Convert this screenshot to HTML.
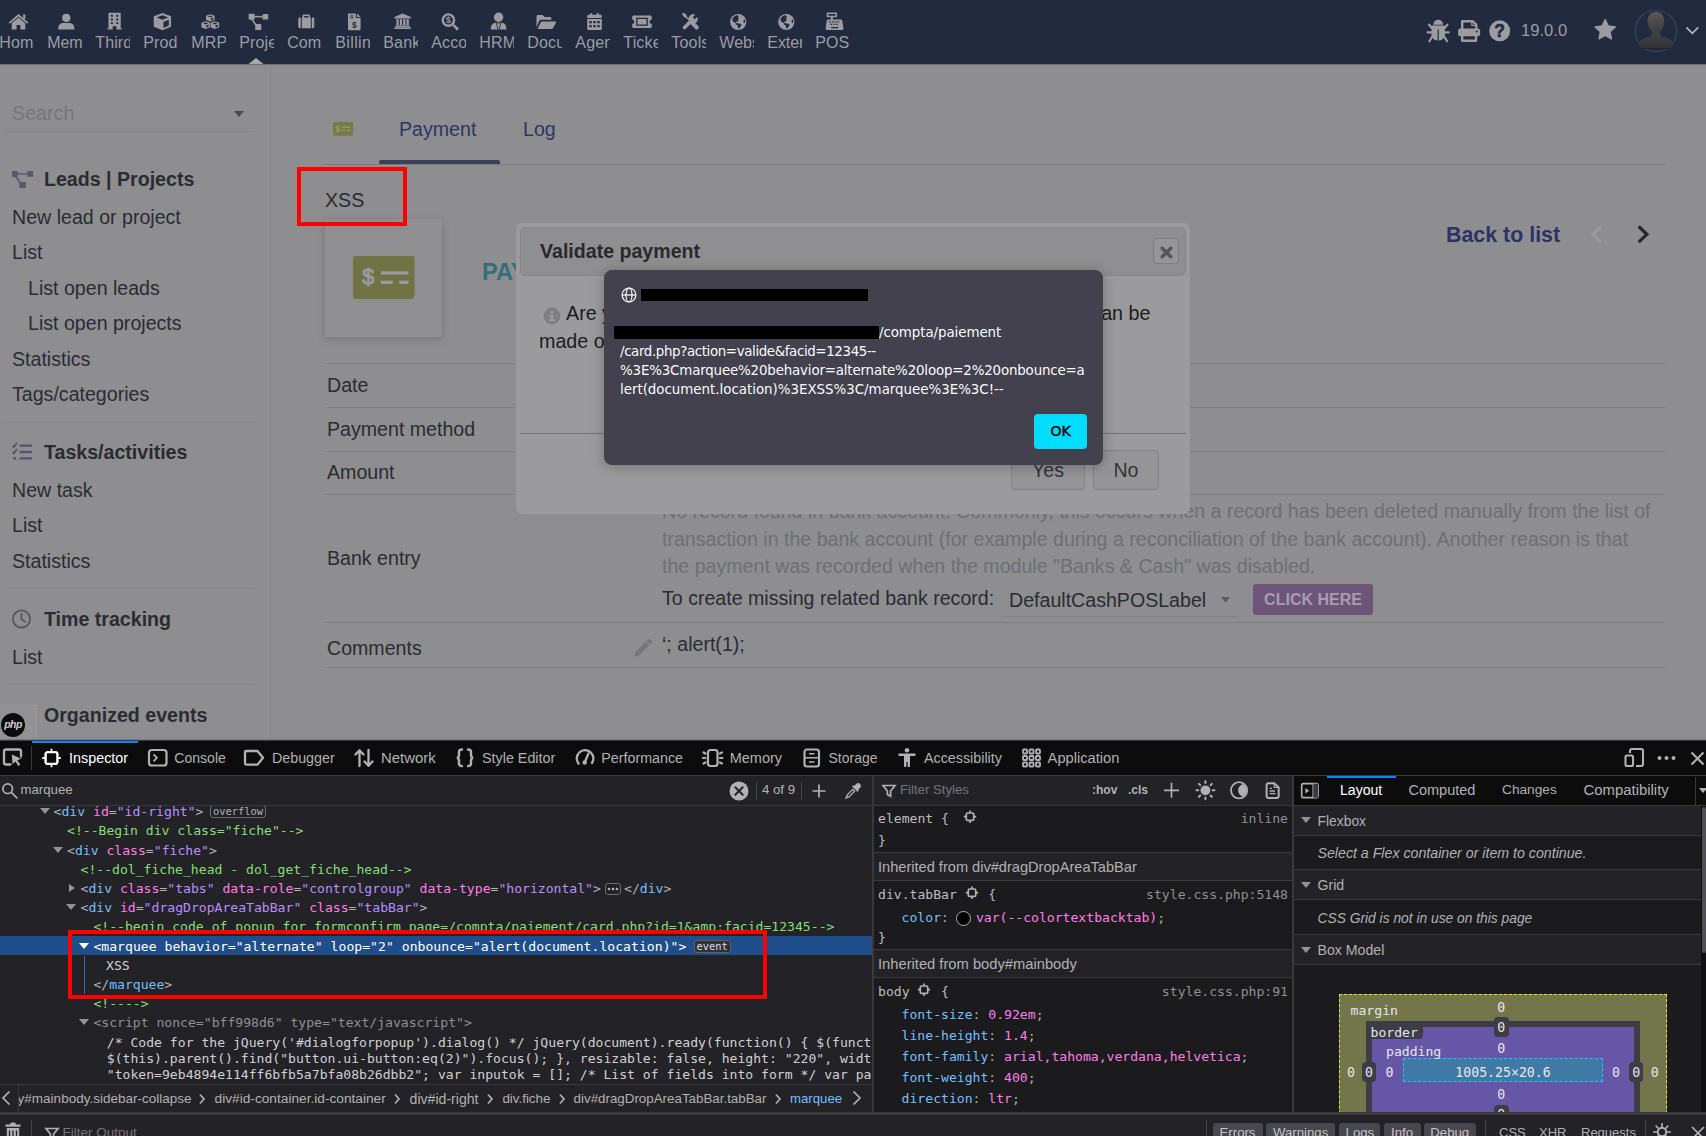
<!DOCTYPE html>
<html lang="en">
<head>
<meta charset="utf-8">
<title>Payment - XSS</title>
<style>
*{box-sizing:border-box;margin:0;padding:0}
html,body{width:1706px;height:1136px;overflow:hidden;background:#8e8e90}
body{position:relative;font-family:"Liberation Sans",Arial,sans-serif;color:#2b2b33}
.abs{position:absolute}
svg{display:block;position:absolute;overflow:visible}
/* ---------- top bar ---------- */
#top{position:absolute;left:0;top:0;width:1706px;height:64px;background:#222a40}
#topline{position:absolute;left:0;top:64px;width:1706px;height:1px;background:#6c6c72}
.mi{position:absolute;top:0;width:48px;height:64px}
.mi span{position:absolute;left:-0.7px;top:33px;width:34.6px;overflow:hidden;white-space:nowrap;font-size:16px;line-height:20px;color:#9c9ca0}
.mi svg{left:13px;top:10px;width:22px;height:20px;fill:#9c9ca0}
/* ---------- sidebar ---------- */
#side{position:absolute;left:0;top:65px;width:271px;height:676px;background:#8e8e90;border-right:1px solid #87878a}
.sl{position:absolute;left:12px;font-size:19.6px;line-height:24px;color:#2b2b35;white-space:nowrap}
.sl.in{left:28px}
.sh{position:absolute;left:44px;font-size:19.6px;line-height:24px;font-weight:bold;color:#2b2b33;white-space:nowrap}
.shr{position:absolute;left:4px;width:250px;height:1px;background:#88888b}
/* ---------- main ---------- */
.hr{position:absolute;left:325px;width:1340px;height:1px;background:#7f7f83}
.lab{position:absolute;left:327px;font-size:19.6px;line-height:24px;color:#2b2b33;white-space:nowrap}

/* ---------- devtools ---------- */
#devtools{position:absolute;left:0;top:739px;width:1706px;height:397px;background:#232327;font-family:"Liberation Sans",sans-serif;overflow:hidden}
#devtools .tb{position:absolute;left:0;top:2px;width:1706px;height:34px;background:#0c0c0d}
#devtools .tab{position:absolute;top:10px;font-size:14.400px;line-height:18px;color:#b1b1b3;white-space:nowrap}
#devtools svg.ic{fill:none;stroke:#b1b1b3;stroke-width:1.700}
.mono{font-family:"DejaVu Sans Mono","Liberation Mono",monospace;font-size:13.100px;white-space:pre}
.ml{position:absolute;height:19px;line-height:19px;color:#b1b1b3}
.t{color:#75bfff}.an{color:#ff7de9}.av{color:#b98eff}.c{color:#86de74}
.arr{position:absolute;width:0;height:0;border-left:5px solid transparent;border-right:5px solid transparent;border-top:6.500px solid #939395}
.arr.r{border-top:4.500px solid transparent;border-bottom:4.500px solid transparent;border-left:6px solid #939395;border-right:0}
.badge{position:absolute;height:13px;line-height:11px;border:1px solid #6b6b70;border-radius:3px;font-family:"DejaVu Sans Mono",monospace;font-size:10.400px;color:#b1b1b3;padding:0 2px}
.bc{top:5px;font-size:13.700px;line-height:18px;color:#b1b1b3;white-space:nowrap}
.bmt{font-family:"DejaVu Sans Mono",monospace;font-size:13.100px;line-height:16px;margin-top:1.700px;color:#e6e6ea;white-space:pre}
</style>
</head>
<body>
<div id="top">
<svg width="1706" height="64" viewBox="0 0 1706 64" style="left:0;top:0" fill="#9c9ca0">
<!-- home -->
<g transform="translate(18.5,21.7)"><path d="M-9.9 .7 0-7.8l9.9 8.5-1.2 1.4L0-5.2l-8.7 7.3z"/><path d="M-6.8 1.6 0-4.1l6.8 5.7v6.2H1.9V3.2h-3.8v4.6h-4.9z"/><rect x="4.6" y="-7.3" width="2.3" height="4.4"/></g>
<!-- user -->
<g transform="translate(66.3,21.7)"><circle cx="0" cy="-3.8" r="4.1"/><path d="M-8 7.8V6.1c0-2.9 2.4-4.7 5-4.7h6c2.6 0 5 1.8 5 4.7v1.7z"/></g>
<!-- building -->
<g transform="translate(114.500,21.700)"><path fill-rule="evenodd" d="M-6-8.900H6.200V6.800h1.300v1.100H2V4.500H-1.800v3.400h-5.500V6.800H-6zM-3.700-6.900v1.900h2.100v-1.900zm5.400 0v1.900h2.100v-1.900zm-5.400 3.700v1.900h2.100v-1.900zm5.400 0v1.900h2.100v-1.900zm-5.400 3.700v1.900h2.100V.5zm5.400 0v1.900h2.100V.5z"/></g>
<!-- cube -->
<g transform="translate(162.400,21.700) scale(1.03)"><path fill-rule="evenodd" d="M0-8.4 8.4-5.3v10.2L0 8.4l-8.4-3.5V-5.3zM0-6.2-5.6-4.1 0-2 5.600-4.100zM1 .2v5.800l5.200-2.200v-5.600z"/></g>
<!-- cubes -->
<g transform="translate(210.300,21.900) scale(1,.92)"><path fill-rule="evenodd" d="M0-8.300 4.300-6.700v4.600L0-.3l-4.300-1.800v-4.600zM0-7-2.600-6 0-5 2.600-6zM.600-3.900v2.200l2.300-1v-2.100z"/><path fill-rule="evenodd" d="M-4.600-.6-.3 1v4.800l-4.300 1.900-4.300-1.900V1zM-4.600.7-7.200 1.700-4.600 2.700-2 1.700zM-4 3.800v2.400l2.300-1V2.900z"/><path fill-rule="evenodd" d="M4.600-.6 8.900 1v4.800L4.600 7.700.3 5.800V1zM4.600.7 2 1.700l2.600 1 2.600-1zM5.200 3.800v2.400l2.300-1V2.900z"/></g>
<!-- project diagram -->
<g transform="translate(258,21.500)"><rect x="-9.300" y="-7.800" width="6" height="6.100" rx=".7"/><rect x="4.500" y="-7.600" width="5.700" height="5.700" rx=".7"/><rect x="-2.800" y="2.600" width="6.100" height="6" rx=".7"/><rect x="-3.500" y="-5.600" width="8.200" height="1.500"/><path d="M-6-2-1.200 4.500" fill="none" stroke="#9c9ca0" stroke-width="1.500"/></g>
<!-- suitcase -->
<g transform="translate(306.300,21.800) scale(.92)"><path fill-rule="evenodd" d="M-4-4.700v-1.800c0-.8.600-1.400 1.400-1.400h5.200c.8 0 1.400.6 1.400 1.400v1.800h.9V7h-9.800V-4.700zm1.700 0h4.600v-1.500h-4.600z"/><path d="M-6-4.700V7h-1.100C-8 7-8.700 6.300-8.700 5.400v-8.500c0-.9.700-1.600 1.600-1.600zM6-4.700V7h1.100c.9 0 1.600-.7 1.600-1.600v-8.500c0-.9-.7-1.600-1.600-1.600z"/></g>
<!-- file invoice dollar -->
<g transform="translate(354.300,21.800)"><path d="M-6.300-8.400H1.600v4.700h4.700V7.600c0 .5-.4.800-.8.800H-5.500c-.4 0-.8-.3-.8-.8zM2.700-8.400 6.300-4.800H2.700z"/><rect x="-4.300" y="-6.300" width="3.600" height=".9" fill="#222a40"/><rect x="-4.300" y="-4.400" width="3.600" height=".9" fill="#222a40"/><text x="0" y="5.800" font-size="8.500" font-weight="bold" text-anchor="middle" fill="#222a40" font-family="Liberation Sans, sans-serif">$</text></g>
<!-- university -->
<g transform="translate(402.600,21.700) scale(.94)"><path d="M0-8.600 8.700-5v1.500H-8.700V-5z"/><rect x="-6.600" y="-2.800" width="2.400" height="6.400"/><rect x="-3" y="-2.800" width="2.400" height="6.400"/><rect x=".6" y="-2.800" width="2.400" height="6.400"/><rect x="4.200" y="-2.800" width="2.400" height="6.400"/><rect x="-7.600" y="3.900" width="15.200" height="1.600"/><rect x="-8.700" y="5.900" width="17.400" height="1.800"/></g>
<!-- search dollar -->
<g transform="translate(450,21.700)"><circle cx="-1.600" cy="-1.600" r="5.700" fill="none" stroke="#9c9ca0" stroke-width="2.400"/><path d="M2.700 4.300 4.300 2.700 8.600 7 7 8.600z" stroke="#9c9ca0" stroke-width=".8" stroke-linejoin="round"/><text x="-1.600" y="1.500" font-size="8.500" font-weight="bold" text-anchor="middle" font-family="Liberation Sans, sans-serif">$</text></g>
<!-- user tie -->
<g transform="translate(498.600,21.700)"><circle cx="0" cy="-4.400" r="4.700"/><path d="M-3 1.100h6C5.800 1.300 7.700 3.200 7.700 5.800v2.100H-7.700V5.800C-7.700 3.200-5.800 1.300-3 1.100z"/><path d="M-2.200 1.300-.55 7.900M2.200 1.300 .55 7.900" fill="none" stroke="#222a40" stroke-width=".9"/><path d="M-.9 1.500h1.800l-.5 1.100z" fill="#222a40"/></g>
<!-- folder open -->
<g transform="translate(546,22)"><path d="M-9.500 5.200V-5.600c0-.9.700-1.500 1.500-1.500h4.600l2 2h5.300c.8 0 1.500.6 1.500 1.500v1.300H-4.400c-1 0-1.900.5-2.400 1.400z"/><path d="M-8.400 7-5.300.4c.3-.6.900-.9 1.500-.9H9.100c.7 0 1.100.7.800 1.300L7.100 6.100C6.800 6.700 6.200 7 5.600 7z"/></g>
<!-- calendar -->
<g transform="translate(594.500,21.700) scale(.95,1)"><path d="M-7.700-3.700V-5.300c0-.9.700-1.600 1.600-1.600h1.600v-1.600h2.100v1.600h4.800v-1.600h2.100v1.600h1.600c.9 0 1.600.7 1.600 1.600v1.600z"/><path fill-rule="evenodd" d="M-7.700-2.600H7.700V6.800c0 .9-.7 1.600-1.600 1.600H-6.100c-.9 0-1.600-.7-1.600-1.600zM-5.500-.7v2.300h2.600V-.7zm4.200 0v2.300h2.600V-.7zm4.200 0v2.300h2.600V-.7zM-5.500 3.300v2.300h2.600V3.300zm4.200 0v2.300h2.600V3.300zm4.200 0v2.300h2.600V3.300z"/></g>
<!-- ticket -->
<g transform="translate(642,21.700)"><path fill-rule="evenodd" d="M-9.800-4.700c0-.9.700-1.600 1.600-1.600H8.200c.9 0 1.600.7 1.600 1.600v2.500c-1.200 0-2.200 1-2.200 2.200s1 2.200 2.200 2.200v2.500c0 .9-.7 1.600-1.600 1.600H-8.200c-.9 0-1.600-.7-1.600-1.600V2.200c1.200 0 2.200-1 2.200-2.200s-1-2.200-2.200-2.200zM-5.800-4v8H5.800v-8zm1.300 1.300H4.500v5.400H-4.500z"/></g>
<!-- tools -->
<g transform="translate(690.700,21.400) scale(.9)"><g transform="rotate(45)"><path d="M-1.700-8.600v3.700h3.400v-3.700c2.300.8 3.500 2.800 3.500 4.800 0 2-1.200 3.600-3.100 4.400V10c0 1-.9 1.700-2.100 1.700S-2.100 11-2.100 10V.6C-4-.2-5.200-1.800-5.200-3.800c0-2 1.200-4 3.500-4.800z"/></g><g transform="rotate(-45)"><path d="M-1.200-12.600h2.400l.6 4.300-1 1.600V-.5h-1.600v-6.200l-1-1.600z"/><rect x="-2.200" y="1" width="4.400" height="10.500" rx="1.500"/></g></g>
<!-- globe 1 -->
<g transform="translate(738.200,22)"><circle r="8.100"/><path fill="#222a40" d="M-.8-6.800.8-5.400-.6-4.400.9-3.200-.3-2.200.2-.8-1.800-.2-2.600 1-4.400.2-5.900-1.800-5.600-3.800-4-5.600-2.400-6.600z"/><path fill="#222a40" d="M-2.600.9 0 1.200 3.400 2.600 2.600 4.400 1.400 5.400.9 7.200-.2 5.600-.6 3.400-2.200 2.400z"/><ellipse cx="6.100" cy="-.8" rx=".8" ry="2" fill="#222a40"/></g>
<!-- globe 2 -->
<g transform="translate(786.300,22)"><circle r="8.100"/><path fill="#222a40" d="M-.8-6.800.8-5.400-.6-4.400.9-3.200-.3-2.200.2-.8-1.800-.2-2.600 1-4.400.2-5.900-1.800-5.600-3.800-4-5.600-2.400-6.600z"/><path fill="#222a40" d="M-2.600.9 0 1.200 3.400 2.600 2.600 4.400 1.400 5.400.9 7.200-.2 5.600-.6 3.400-2.200 2.400z"/><ellipse cx="6.100" cy="-.8" rx=".8" ry="2" fill="#222a40"/></g>
<!-- cash register -->
<g transform="translate(834.600,21.200)"><path fill-rule="evenodd" d="M-7.200-8.600H1.800c.4 0 .7.300.7.700v3.200c0 .4-.3.700-.7.700H-7.200c-.4 0-.7-.3-.7-.7v-3.200c0-.4.300-.7.700-.7zM-6.200-7.100v1.600H.8v-1.600z"/><rect x="-3.700" y="-4.200" width="2" height="2.800"/><path fill-rule="evenodd" d="M-6.600-1.600H6.400c.6 0 1.100.4 1.200 1l1.200 6.800v1.400c0 .6-.5 1.100-1.100 1.100H-7.800c-.6 0-1.100-.5-1.100-1.100V6.200l1.100-6.800c.1-.6.600-1 1.200-1zM-5.300 0v1.400h1.500V0zm2.800 0v1.400H-1V0zm2.800 0v1.400h1.500V0zm2.800 0v1.400h1.500V0zM-4 2.500v1.400h1.500V2.500zm2.800 0v1.400h1.500V2.500zm2.800 0v1.400h1.500V2.500zM-3.500 5.700v1.400H3.500V5.700z"/></g>
<!-- active triangle -->
<path d="M248.500 64 256 58 263.500 64z" fill="#a8a8aa"/>
<!-- bug -->
<g transform="translate(1438.200,31)"><path d="M-4.900-6.300A4.900 4.900 0 0 1 4.900-6.300z"/><path d="M-6.700-5.600H6.700v9.100c0 3-2.200 5.800-6.100 6.100V-1.500H-.6V9.600C-4.500 9.300-6.700 6.500-6.700 3.500z"/><path d="M-6.500-3-9.200-6.400M6.500-3 9.200-6.400M-6.500 1.300h-4.100M6.500 1.300h4.100M-6.300 6-8.800 10.300M6.300 6 8.800 10.300" fill="none" stroke="#9c9ca0" stroke-width="2.200" stroke-linecap="round"/></g>
<!-- print -->
<g transform="translate(1469.100,31)"><path d="M-6.900-1.500V-9.700H3.700L7.200-6.400v4.900" fill="none" stroke="#9c9ca0" stroke-width="2.400" stroke-linejoin="round"/><path d="M2.800-9.700v4h4.400" fill="none" stroke="#9c9ca0" stroke-width="1.200"/><rect x="-11" y="-2.400" width="22" height="7.600" rx="2.200"/><rect x="-6.900" y="4" width="13.800" height="5.800" fill="#222a40" stroke="#9c9ca0" stroke-width="2.400" stroke-linejoin="round"/><circle cx="7.700" cy=".6" r="1" fill="#222a40"/></g>
<!-- help -->
<g transform="translate(1499.700,30.800)"><circle r="10.500"/><text x="0" y="6.300" font-size="17.500" font-weight="bold" text-anchor="middle" fill="#222a40" stroke="#222a40" stroke-width=".5" font-family="Liberation Sans, sans-serif">?</text></g>
<!-- star -->
<path transform="translate(1605.200,30.200)" d="M0-10.600 3-4.130 10.080-3.280 4.850 1.580 6.230 8.580 0 5.100-6.230 8.580-4.850 1.580-10.080-3.280-3-4.130z" stroke="#9c9ca0" stroke-width="1.400" stroke-linejoin="round"/>
<!-- avatar -->
<g transform="translate(1655.900,30.900)"><defs><linearGradient id="avg" x1="0" y1="0" x2="0" y2="1"><stop offset="0" stop-color="#58585a"/><stop offset=".45" stop-color="#424244"/><stop offset="1" stop-color="#343436"/></linearGradient></defs><circle r="20.700" fill="#222a40" stroke="#3b4562" stroke-width="1.100"/><path d="M0-19.200C5-19.200 8.300-15.500 8.300-10.500 8.300-6.500 7.200-3 5-.5L4.300 2.500C4.300 4.500 5.500 5.500 7.500 6.200L13.500 8C15.500 8.700 16.300 10 16.300 12v5.400H-16.300V12c0-2 .8-3.300 2.800-4L-7.500 6.200c2-.7 3.200-1.700 3.200-3.700L-5-.5C-7.200-3-8.300-6.500-8.300-10.500-8.300-15.500-5-19.200 0-19.200z" fill="url(#avg)"/><path d="M-14.800 17.400h29.600" stroke="#222226" stroke-width="1" fill="none"/></g>
<!-- chevron -->
<path d="M1686.400 27.400 1692.300 33.300 1698.200 27.400" fill="none" stroke="#b4b4b8" stroke-width="1.700"/>
</svg>
<div class="mi" style="left:0"><span style="letter-spacing:0.08px">Home</span></div>
<div class="mi" style="left:48px"><span style="letter-spacing:-0.185px">Members</span></div>
<div class="mi" style="left:96px"><span style="letter-spacing:0.109px">Third-parties</span></div>
<div class="mi" style="left:144px"><span style="letter-spacing:0.061px">Products</span></div>
<div class="mi" style="left:192px"><span style="letter-spacing:0.148px">MRP</span></div>
<div class="mi" style="left:240px"><span style="letter-spacing:0.13px">Projects</span></div>
<div class="mi" style="left:288px"><span style="letter-spacing:-0.027px">Commerce</span></div>
<div class="mi" style="left:336px"><span style="letter-spacing:0.368px">Billing</span></div>
<div class="mi" style="left:384px"><span style="letter-spacing:0.133px">Banks</span></div>
<div class="mi" style="left:432px"><span style="letter-spacing:0.107px">Accounting</span></div>
<div class="mi" style="left:480px"><span style="letter-spacing:0.188px">HRM</span></div>
<div class="mi" style="left:528px"><span style="letter-spacing:0.162px">Documents</span></div>
<div class="mi" style="left:576px"><span style="letter-spacing:0.158px">Agenda</span></div>
<div class="mi" style="left:624px"><span style="letter-spacing:0.155px">Tickets</span></div>
<div class="mi" style="left:672px"><span style="letter-spacing:0.175px">Tools</span></div>
<div class="mi" style="left:720px"><span style="letter-spacing:0.025px">Websites</span></div>
<div class="mi" style="left:768px"><span style="letter-spacing:-0.069px">External</span></div>
<div class="mi" style="left:816px"><span style="letter-spacing:0.07px">POS</span></div>
<div class="abs" style="left:1521px;top:21px;font-size:16.600px;line-height:20px;color:#9c9ca0">19.0.0</div>
</div>
<div id="topline"></div>
<div id="side">
<div class="abs" style="left:12px;top:36px;font-size:19.700px;line-height:24px;color:#76767b">Search</div>
<svg width="10" height="6" viewBox="0 0 10 6" style="left:234px;top:46px"><path d="M0 0h10L5 6z" fill="#4a4a50"/></svg>
<div class="abs" style="left:4px;top:64px;width:250px;height:3px;border-bottom:1px solid #838387;border-radius:0 0 4px 4px"></div>
<svg width="22" height="18" viewBox="0 0 22 18" style="left:12px;top:106px" fill="#5a5570"><rect x="0" y="0" width="5.700" height="5.700" rx=".5"/><rect x="15.300" y="0" width="5.800" height="5.700" rx=".5"/><rect x="7.400" y="11" width="6.600" height="5.900" rx=".5"/><rect x="5" y="2.200" width="11" height="1.400"/><path d="M3.500 5.200 8.600 12.300" fill="none" stroke="#5a5570" stroke-width="1.500"/></svg>
<div class="sh" style="top:102px">Leads | Projects</div>
<div class="sl" style="top:140px">New lead or project</div>
<div class="sl" style="top:175px">List</div>
<div class="sl in" style="top:211px">List open leads</div>
<div class="sl in" style="top:246px">List open projects</div>
<div class="sl" style="top:282px">Statistics</div>
<div class="sl" style="top:317px">Tags/categories</div>
<div class="shr" style="top:357px"></div>
<svg width="22" height="18" viewBox="0 0 22 18" style="left:12px;top:378px" fill="none" stroke="#595273" stroke-width="2.300"><path d="M7.500 2.700H20M7.500 9H20M7.500 15.300H20"/><path d="M.5 2.500 2 4 5-.2M.5 8.800 2 10.300 5 6.100" stroke-width="1.900"/><circle cx="2.600" cy="15.300" r="1.500" fill="#595273" stroke="none"/></svg>
<div class="sh" style="top:375px">Tasks/activities</div>
<div class="sl" style="top:413px">New task</div>
<div class="sl" style="top:448px">List</div>
<div class="sl" style="top:484px">Statistics</div>
<div class="shr" style="top:523px"></div>
<svg width="20" height="20" viewBox="0 0 20 20" style="left:12px;top:544px" fill="none" stroke="#55555d" stroke-width="1.700"><circle cx="9.500" cy="10" r="8.600"/><path d="M9.500 4.800V10.300L13 12.600" stroke-linecap="round"/></svg>
<div class="sh" style="top:542px">Time tracking</div>
<div class="sl" style="top:580px">List</div>
<div class="shr" style="top:619px"></div>
<div class="sh" style="top:638px">Organized events</div>
<div class="abs" style="left:0;top:640px;width:37px;height:36px;background:#929294;border-top:1px solid #99999b;border-right:1px solid #99999b"></div>
<div class="abs" style="left:1px;top:648px;width:24px;height:24px;border-radius:12px;background:#0c0c0d"></div>
<div class="abs" style="left:3px;top:652px;width:20px;text-align:center;font-size:10.500px;line-height:14px;font-style:italic;font-weight:bold;color:#c8c8cc;letter-spacing:-0.5px">php</div>
</div>
<div id="main">
<!-- tabs -->
<svg width="20" height="13.700" viewBox="0 0 22 15" style="left:332.500px;top:122.100px" preserveAspectRatio="none"><rect x="0" y="0" width="22" height="15" rx="1.500" fill="#767a45"/><text x="2.800" y="11" font-size="9" font-weight="bold" fill="#9a9d78" font-family="Liberation Sans, sans-serif">$</text><rect x="9.500" y="5" width="9.500" height="1.300" fill="#9a9d78"/><rect x="9.500" y="8.500" width="3.800" height="1.300" fill="#9a9d78"/><rect x="15.200" y="8.500" width="3.800" height="1.300" fill="#9a9d78"/></svg>
<div class="abs" style="left:399px;top:117px;font-size:19.600px;line-height:24px;color:#2f3563">Payment</div>
<div class="abs" style="left:523px;top:117px;font-size:19.600px;line-height:24px;color:#2f3563">Log</div>
<div class="hr" style="top:164px;background:#7d7d81"></div>
<div class="abs" style="left:379px;top:160px;width:121px;height:4px;background:#3a4258;border-radius:2px 2px 0 0"></div>
<!-- XSS -->
<div class="abs" style="left:325px;top:188px;font-size:19.600px;line-height:24px;color:#2b2b33">XSS</div>
<!-- card -->
<div class="abs" style="left:325px;top:219px;width:117px;height:118px;background:#8f8f91;box-shadow:0 3px 8px rgba(60,60,70,.22),0 0 3px rgba(60,60,70,.1)"></div>
<svg width="62" height="44" viewBox="0 0 62 44" style="left:352.500px;top:256px"><rect x="0" y="0" width="61.500" height="43.100" rx="3" fill="#707444"/><text x="9.300" y="28.300" font-size="21.500" fill="#9b9b9f" stroke="#9b9b9f" stroke-width="1" font-family="Liberation Sans, sans-serif">$</text><rect x="27.800" y="15.400" width="27.600" height="3.100" fill="#9b9b9f"/><rect x="27.800" y="24.700" width="12" height="3.200" fill="#9b9b9f"/><rect x="46.200" y="24.700" width="9.200" height="3.200" fill="#9b9b9f"/></svg>
<div class="abs" style="left:482px;top:256px;font-size:23.500px;line-height:32px;font-weight:bold;color:#33707a;white-space:nowrap">PAYMENT</div>
<div class="abs" style="left:1446px;top:222px;font-size:21.400px;line-height:26px;font-weight:bold;color:#2d3262;white-space:nowrap">Back to list</div>
<svg width="60" height="26" viewBox="0 0 60 26" style="left:1590px;top:222px" fill="none" stroke-width="3.200"><path d="M11 4.500 2.800 12.300 11 20.100" stroke="#9a9a9d"/><path d="M48.700 4.500 56.900 12.300 48.700 20.100" stroke="#26262e"/></svg>
<div class="abs" style="left:297px;top:167px;width:110px;height:59px;border:4px solid #ff0000"></div>
<!-- rows -->
<div class="hr" style="top:363px"></div>
<div class="lab" style="top:373px">Date</div>
<div class="hr" style="top:407px"></div>
<div class="lab" style="top:417px">Payment method</div>
<div class="hr" style="top:451px"></div>
<div class="lab" style="top:460px">Amount</div>
<div class="hr" style="top:494px"></div>
<div class="lab" style="top:546px">Bank entry</div>
<div class="abs" style="left:662px;top:498px;width:995px;font-size:19.600px;line-height:27.500px;color:#6f6f75">No record found in bank account. Commonly, this occurs when a record has been deleted manually from the list of transaction in the bank account (for example during a reconciliation of the bank account). Another reason is that the payment was recorded when the module "Banks &amp; Cash" was disabled.</div>
<div class="abs" style="left:662px;top:585px;font-size:19.600px;line-height:26px;color:#2b2b33;white-space:nowrap">To create missing related bank record:</div>
<div class="abs" style="left:1009px;top:587px;font-size:19.600px;line-height:26px;color:#2b2b33;white-space:nowrap">DefaultCashPOSLabel</div>
<svg width="10" height="6" viewBox="0 0 10 6" style="left:1221px;top:597px"><path d="M0 0h9L4.500 5.500z" fill="#5a5a60"/></svg>
<div class="abs" style="left:1001px;top:614px;width:239px;height:3px;border-bottom:1px solid #838387;border-radius:0 0 4px 4px"></div>
<div class="abs" style="left:1253px;top:584px;width:120px;height:31px;background:#6c5579;border-radius:3px;color:#a89db0;font-size:16px;line-height:31px;font-weight:bold;text-align:center">CLICK HERE</div>
<div class="hr" style="top:622px"></div>
<div class="lab" style="top:636px">Comments</div>
<svg width="20" height="20" viewBox="0 0 20 20" style="left:633px;top:638px" fill="#77777b"><path d="M1.500 18.500 2.300 14.200 12.700 3.800 16.200 7.300 5.800 17.700zM13.600 2.900 15.200 1.300c.5-.5 1.300-.5 1.800 0l1.700 1.700c.5.5.5 1.300 0 1.800L17.100 6.400z"/></svg>
<div class="abs" style="left:662px;top:632px;font-size:19.600px;line-height:24px;color:#2b2b33;white-space:nowrap">&#8216;; alert(1);</div>
<div class="hr" style="top:667px"></div>
</div>
<div id="dialog">
<div class="abs" style="left:516px;top:223px;width:674px;height:291px;background:#9b9b9d;border-radius:6px"></div>
<div class="abs" style="left:520px;top:227px;width:666px;height:49px;background:#8f8f91;border:1px solid #88888b;border-radius:5px"></div>
<div class="abs" style="left:540px;top:237.500px;font-size:19.600px;line-height:26px;font-weight:bold;color:#29292c;white-space:nowrap">Validate payment</div>
<div class="abs" style="left:1153px;top:238px;width:25.500px;height:25.700px;background:#969698;border:1px solid #7c7c80;border-radius:4px"></div>
<svg width="13" height="13" viewBox="0 0 13 13" style="left:1160.300px;top:245.600px" stroke="#55555a" stroke-width="3.400" stroke-linecap="round" fill="none"><path d="M2.200 2.200 10.800 10.800M10.800 2.200 2.200 10.800"/></svg>
<svg width="18" height="18" viewBox="0 0 18 18" style="left:542.900px;top:306.500px"><circle cx="9" cy="9" r="8.400" fill="#7f7f81"/><rect x="7.700" y="3.800" width="2.600" height="2.600" rx=".6" fill="#9d9d9f"/><path d="M6.300 7.800h4v4.800h1.300v1.600H6.300v-1.600h1.400V9.400H6.300z" fill="#9d9d9f"/></svg>
<div class="abs" style="left:566px;top:299px;font-size:19.700px;line-height:28px;color:#1c1c1f;white-space:nowrap">Are you sure you want to validate this payment? No change can be</div>
<div class="abs" style="left:539px;top:327px;font-size:19.700px;line-height:28px;color:#1c1c1f;white-space:nowrap">made once payment is validated.</div>
<div class="abs" style="left:520px;top:432.800px;width:666px;height:1px;background:#737376"></div>
<div class="abs" style="left:1011px;top:450.300px;width:74px;height:39.300px;background:#959597;border:1px solid #838386;border-radius:4px;font-size:19.600px;line-height:39.500px;text-align:center;color:#333338">Yes</div>
<div class="abs" style="left:1093px;top:450.300px;width:66px;height:39.300px;background:#959597;border:1px solid #838386;border-radius:4px;font-size:19.600px;line-height:39.500px;text-align:center;color:#333338">No</div>
</div>
<div id="alert">
<div class="abs" style="left:604px;top:270px;width:498.700px;height:194.500px;background:#42414d;border-radius:8px;box-shadow:0 2px 14px rgba(0,0,0,.25)"></div>
<svg width="16" height="16" viewBox="0 0 16 16" style="left:620.600px;top:286.500px" fill="none" stroke="#fbfbfe" stroke-width="1.200"><circle cx="8" cy="8" r="6.900"/><ellipse cx="8" cy="8" rx="3" ry="6.900"/><path d="M1.100 8h13.800"/></svg>
<div class="abs" style="left:641px;top:288.500px;width:227px;height:12px;background:#000"></div>
<div class="abs" style="left:614px;top:326px;width:265px;height:12.500px;background:#000"></div>
<div class="abs" style="left:620px;top:323px;width:480px;font-family:'DejaVu Sans','Liberation Sans',sans-serif;font-size:13.400px;line-height:19px;color:#fbfbfe;white-space:nowrap;letter-spacing:-0.17px"><span style="display:inline-block;width:259px"></span><span style="letter-spacing:-0.07px">/compta/paiement</span><br><span style="letter-spacing:-0.38px">/card.php?action=valide&amp;facid=12345--</span><br>%3E%3Cmarquee%20behavior=alternate%20loop=2%20onbounce=a<br><span style="letter-spacing:-0.015px">lert(document.location)%3EXSS%3C/marquee%3E%3C!--</span></div>
<div class="abs" style="left:1034px;top:414px;width:53px;height:35px;background:#00ddff;border-radius:4px;font-family:'DejaVu Sans','Liberation Sans',sans-serif;font-size:14px;line-height:35px;-webkit-text-stroke:0.6px #15141a;text-align:center;color:#15141a">OK</div>
</div>
<div id="devtools">
<div class="abs" style="left:0;top:0;width:1706px;height:1px;background:#7a7a7d"></div><div class="abs" style="left:0;top:1px;width:1706px;height:1px;background:#3c3c3f"></div>
<div class="tb"></div>
<div class="abs" style="left:32px;top:2px;width:106px;height:2px;background:#0a84ff"></div>
<div class="abs" style="left:31px;top:7px;width:1px;height:24px;background:#38383d"></div>
<!-- toolbar icons -->
<svg class="ic" width="1706" height="34" viewBox="0 0 1706 34" style="left:0;top:3px">
<g stroke-width="2.300"><path d="M21 14.500V9.500c0-1.100-.9-2-2-2H6c-1.100 0-2 .9-2 2v11c0 1.100.9 2 2 2h4.500" stroke-linecap="round"/><path d="M11.800 12.600 21.300 16.700 17.300 18.200 20.300 22.700 18.300 24 15.400 19.500 12.600 22.300z" fill="#b1b1b3" stroke="none"/></g>
<g stroke="#fff" stroke-width="2.400"><rect x="45.600" y="10.100" width="11.800" height="11.800" rx="2.200"/><path d="M51.500 6.800v3M51.500 22.200v3M42.300 16h3M57.700 16h3" stroke-width="1.800"/></g>
<g stroke-width="2.200"><rect x="149" y="8" width="17.500" height="15.500" rx="2.800"/><path d="M153.500 12.300 157 15.800 153.500 19.300" stroke-width="1.700"/></g>
<path d="M246 9h11.500l5.500 6.800-5.500 6.800H246c-.6 0-1-.4-1-1V10c0-.6.400-1 1-1z" stroke-width="2.300" stroke-linejoin="round"/>
<g stroke-width="2.300" stroke-linecap="round" stroke-linejoin="round"><path d="M359.500 24V8.500M355.500 12.500 359.500 8.200 363.500 12.500M368.500 8v15.500M364.500 19.500 368.500 23.800 372.500 19.500"/></g>
<g stroke-width="2.400" stroke-linecap="round"><path d="M462 7.500c-2 0-3 .8-3 2.500v3c0 1.500-.8 2.500-2 2.800 1.200.3 2 1.300 2 2.800v3c0 1.700 1 2.500 3 2.500M468 7.500c2 0 3 .8 3 2.500v3c0 1.500.8 2.500 2 2.800-1.200.3-2 1.300-2 2.800v3c0 1.700-1 2.500-3 2.500"/></g>
<g stroke-width="2.300" stroke-linecap="round"><path d="M578.500 21.500A8.300 8.300 0 1 1 592 21"/><path d="M588.500 11.500 585.300 19"/><circle cx="584.700" cy="20.500" r="2.200" fill="#b1b1b3" stroke="none"/></g>
<g stroke-width="2.200" stroke-linecap="round"><rect x="708" y="8" width="9.500" height="16" rx="2.500"/><path d="M705.500 11.500 703.500 10.500M705.500 16H703M705.500 20.500 703.500 21.500M720 11.500 722 10.500M720 16h2.500M720 20.500 722 21.500"/></g>
<g stroke-width="2.200"><rect x="804.500" y="7.500" width="14.500" height="17" rx="2.500"/><path d="M804.500 15.800h14.500M809 11.700h5.500M809 20h5.500" stroke-width="1.500"/></g>
<g fill="#b1b1b3" stroke="none"><circle cx="907" cy="8.300" r="2.300"/><path d="M899.500 11.500h15c.7 0 1.200.5 1.200 1.200s-.5 1.200-1.200 1.200H910v10c0 .7-.5 1.200-1.200 1.200s-1.200-.5-1.200-1.200V20h-1.200v3.900c0 .7-.5 1.200-1.200 1.200s-1.200-.5-1.200-1.200v-10h-4.500c-.7 0-1.200-.5-1.200-1.200s.5-1.200 1.200-1.200z"/></g>
<g stroke-width="1.800"><rect x="1023" y="7.500" width="4" height="4" rx=".8"/><rect x="1029.500" y="7.500" width="4" height="4" rx=".8"/><rect x="1036" y="7.500" width="4" height="4" rx=".8"/><rect x="1023" y="14" width="4" height="4" rx=".8"/><rect x="1029.500" y="14" width="4" height="4" rx=".8"/><rect x="1036" y="14" width="4" height="4" rx=".8"/><rect x="1023" y="20.500" width="4" height="4" rx=".8"/><rect x="1029.500" y="20.500" width="4" height="4" rx=".8"/><rect x="1036" y="20.500" width="4" height="4" rx=".8"/></g>
<g stroke-width="2.100"><path d="M1630 11V9c0-1.100.9-2 2-2h9c1.100 0 2 .9 2 2v13c0 1.100-.9 2-2 2h-5"/><rect x="1625.500" y="13.500" width="7.500" height="10.500" rx="1.500"/></g>
<g fill="#b1b1b3" stroke="none"><circle cx="1659.500" cy="16" r="2"/><circle cx="1666.500" cy="16" r="2"/><circle cx="1673.500" cy="16" r="2"/></g>
<path d="M1691.500 10.500 1703.500 22.500M1703.500 10.500 1691.500 22.500" stroke-width="2.100"/>
</svg>
<div class="tab" style="left:69px;font-size:14.37px;color:#fff">Inspector</div>
<div class="tab" style="left:174.3px;font-size:14.06px">Console</div>
<div class="tab" style="left:272px;font-size:14.28px">Debugger</div>
<div class="tab" style="left:381px;font-size:14.91px">Network</div>
<div class="tab" style="left:482px;font-size:14.34px">Style Editor</div>
<div class="tab" style="left:601.3px;font-size:14.27px">Performance</div>
<div class="tab" style="left:729.7px;font-size:14.51px">Memory</div>
<div class="tab" style="left:828.5px;font-size:13.99px">Storage</div>
<div class="tab" style="left:924px;font-size:14.3px">Accessibility</div>
<div class="tab" style="left:1047.6px;font-size:14.7px">Application</div>
<div class="abs" style="left:0;top:36px;width:1706px;height:1px;background:#38383d"></div>
<!-- search row -->
<div class="abs" style="left:0;top:37px;width:1706px;height:29px;background:#232327"></div>
<div class="abs" style="left:0;top:66px;width:1706px;height:1px;background:#38383d"></div>
<svg class="ic" width="18" height="18" viewBox="0 0 18 18" style="left:1px;top:43px" stroke-width="1.800"><circle cx="6.700" cy="6.700" r="4.800"/><path d="M10.300 10.300 16 16" stroke-linecap="round"/></svg>
<div class="abs" style="left:20.500px;top:42px;font-size:13.200px;line-height:18px;color:#b1b1b3">marquee</div>
<svg width="20" height="20" viewBox="0 0 20 20" style="left:729px;top:42px"><circle cx="10" cy="10" r="9.500" fill="#b1b1b3"/><path d="M6.300 6.300 13.700 13.700M13.700 6.300 6.300 13.700" stroke="#232327" stroke-width="2" stroke-linecap="round"/></svg>
<div class="abs" style="left:756px;top:43px;width:1px;height:18px;background:#45454a"></div>
<div class="abs" style="left:762px;top:42px;font-size:13.200px;line-height:18px;color:#b1b1b3;white-space:nowrap">4 of 9</div>
<div class="abs" style="left:801px;top:43px;width:1px;height:18px;background:#45454a"></div>
<svg class="ic" width="16" height="16" viewBox="0 0 16 16" style="left:811px;top:44px" stroke-width="1.700"><path d="M8 1.500v13M1.500 8h13"/></svg>
<svg width="18" height="18" viewBox="0 0 18 18" style="left:844px;top:43px" fill="#b1b1b3"><path d="M12.200 1.900c1.100-1.100 2.800-1.100 3.900 0s1.100 2.800 0 3.900l-2 2 .8.800-1.300 1.300-5.500-5.500 1.300-1.300.8.800z"/><path d="M8.700 6.500 11.500 9.300 5.300 15.500 2.700 16.200 1.700 17.200.8 16.300 1.800 15.300 2.500 12.700zM8.700 8.300 3.800 13.200 3.400 14.600 4.800 14.200 9.700 9.300z" fill-rule="evenodd"/></svg>
<div id="markup" style="position:absolute;left:0;top:67px;width:872px;height:278px;overflow:hidden;background:#232327">
<div class="abs" style="left:0;top:130px;width:872px;height:19.200px;background:#204e8a"></div>
<div class="arr" style="left:40px;top:2.0px"></div>
<div class="ml mono" style="left:53.6px;top:-4.5px">&lt;<span class="t">div</span> <span class="an">id</span>=<span class="av">"id-right"</span>&gt;</div>
<div class="badge" style="left:210px;top:-1.0px">overflow</div>
<div class="ml mono" style="left:67px;top:14.7px"><span class="c">&lt;!--Begin div class="fiche"--&gt;</span></div>
<div class="arr" style="left:53px;top:41.4px"></div>
<div class="ml mono" style="left:67px;top:34.9px">&lt;<span class="t">div</span> <span class="an">class</span>=<span class="av">"fiche"</span>&gt;</div>
<div class="ml mono" style="left:80.5px;top:54.1px"><span class="c">&lt;!--dol_fiche_head - dol_get_fiche_head--&gt;</span></div>
<div class="arr r" style="left:69px;top:78.3px"></div>
<div class="ml mono" style="left:80.5px;top:73.3px">&lt;<span class="t">div</span> <span class="an">class</span>=<span class="av">"tabs"</span> <span class="an">data-role</span>=<span class="av">"controlgroup"</span> <span class="an">data-type</span>=<span class="av">"horizontal"</span>&gt;</div>
<div class="badge" style="left:604.500px;top:77.3px;width:16px;height:12px;padding:0"><svg width="12" height="4" viewBox="0 0 12 4" style="left:1.300px;top:3px" fill="#b1b1b3"><circle cx="2" cy="2" r="1.300"/><circle cx="6" cy="2" r="1.300"/><circle cx="10" cy="2" r="1.300"/></svg></div>
<div class="ml mono" style="left:624px;top:73.3px">&lt;/<span class="t">div</span>&gt;</div>
<div class="arr" style="left:66px;top:98.0px"></div>
<div class="ml mono" style="left:80.5px;top:91.5px">&lt;<span class="t">div</span> <span class="an">id</span>=<span class="av">"dragDropAreaTabBar"</span> <span class="an">class</span>=<span class="av">"tabBar"</span>&gt;</div>
<div class="ml mono" style="left:93.4px;top:110.7px"><span class="c">&lt;!--begin code of popup for formconfirm page=/compta/paiement/card.php?id=1&amp;amp;facid=12345--&gt;</span></div>
<div class="arr" style="left:79px;top:137.4px;border-top-color:#fff"></div>
<div class="ml mono" style="left:93.4px;top:130.9px;color:#fff;letter-spacing:0.023px">&lt;marquee behavior="alternate" loop="2" onbounce="alert(document.location)"&gt;</div>
<div class="badge" style="left:693.500px;top:133.9px;color:#dedee2;border-color:#606066;background:#303035;height:13.500px;line-height:11.500px">event</div>
<div class="abs" style="left:84px;top:150px;width:1px;height:38px;background:#3d6aa3"></div>
<div class="ml mono" style="left:106px;top:150.1px;color:#d0d0d4">XSS</div>
<div class="ml mono" style="left:93.4px;top:169.3px">&lt;/<span class="t">marquee</span>&gt;</div>
<div class="ml mono" style="left:93.4px;top:187.5px"><span class="c">&lt;!----&gt;</span></div>
<div class="arr" style="left:79px;top:213.2px"></div>
<div class="ml mono" style="left:93.4px;top:206.7px;color:#8f8f94">&lt;script nonce="bff998d6" type="text/javascript"&gt;</div>
<div class="ml mono" style="left:106.800px;top:228.5px;height:16px;line-height:16px;color:#d0d0d4">/* Code for the jQuery('#dialogforpopup').dialog() */ jQuery(document).ready(function() { $(function() { $( "#dialogforpopup" ).dialog({</div>
<div class="ml mono" style="left:106.800px;top:244.5px;height:16px;line-height:16px;color:#d0d0d4">$(this).parent().find("button.ui-button:eq(2)").focus(); }, resizable: false, height: "220", width: "500", modal: true,</div>
<div class="ml mono" style="left:106.800px;top:260.5px;height:16px;line-height:16px;color:#d0d0d4">"token=9eb4894e114ff6bfb5a7bfa08b26dbb2"; var inputok = []; /* List of fields into form */ var pageyes = "/compta/paiement/card.php</div>
<div class="abs" style="left:68px;top:124px;width:699px;height:69px;border:4px solid #ff0000"></div>
</div>
<div class="abs" style="left:872px;top:37px;width:2px;height:338px;background:#38383d"></div>
<!-- breadcrumbs -->
<div class="abs" style="left:0;top:344.500px;width:872px;height:1px;background:#38383d"></div>
<div class="abs" style="left:0;top:345.500px;width:872px;height:28px;background:#232327;overflow:hidden">
<svg class="ic" width="10" height="16" viewBox="0 0 10 16" style="left:1px;top:5px" stroke-width="2.200"><path d="M8.500 1.500 2 8 8.500 14.500"/></svg>
<div class="abs" style="left:18px;top:0;width:1px;height:28px;background:#38383d"></div>
<div class="abs" style="left:19px;top:0;width:828px;height:28px;overflow:hidden">
<div class="abs bc" style="left:-1.400px;font-size:13.500px">y#mainbody.sidebar-collapse</div>
<div class="abs bc" style="left:195.600px;font-size:13.690px">div#id-container.id-container</div>
<div class="abs bc" style="left:390.600px;font-size:14.100px">div#id-right</div>
<div class="abs bc" style="left:483.400px;font-size:13.360px">div.fiche</div>
<div class="abs bc" style="left:554.600px;font-size:13.350px">div#dragDropAreaTabBar.tabBar</div>
<div class="abs bc" style="left:771px;font-size:13.200px;color:#75bfff">marquee</div>
<svg class="ic" width="800" height="12" viewBox="0 0 800 12" style="left:0;top:8.500px" stroke-width="1.500" stroke="#8f8f94"><path d="M181 1.500 185 6 181 10.500M376 1.500 380 6 376 10.500M469 1.500 473 6 469 10.500M541 1.500 545 6 541 10.500M757 1.500 761 6 757 10.500"/></svg>
</div>
<svg class="ic" width="10" height="16" viewBox="0 0 10 16" style="left:852px;top:5px" stroke-width="2.200"><path d="M1.500 1.500 8 8 1.500 14.500"/></svg>
</div>
<div id="rules">
<svg class="ic" width="14" height="14" viewBox="0 0 14 14" style="left:882px;top:45px" stroke="#8f8f94" stroke-width="1.300"><path d="M1 1.500h12L8.600 7v5.300L5.400 10.500V7z"/></svg>
<div class="abs" style="left:900px;top:42px;font-size:13.200px;line-height:18px;color:#75757a;white-space:nowrap">Filter Styles</div>
<div class="abs" style="left:1092px;top:42px;font-size:12px;line-height:18px;font-weight:bold;color:#b1b1b3;white-space:nowrap">:hov</div>
<div class="abs" style="left:1128px;top:42px;font-size:12px;line-height:18px;font-weight:bold;color:#b1b1b3;white-space:nowrap">.cls</div>
<svg class="ic" width="1706" height="397" viewBox="0 739 1706 397" style="left:0;top:0;pointer-events:none">
<path d="M1171.500 782.800v15M1164 790.300h15" stroke-width="1.700"/>
<g stroke-width="2" stroke-linecap="round"><circle cx="1205.400" cy="790.300" r="4.900" fill="#b1b1b3" stroke="none"/><path d="M1205.400 781.300v1.700M1205.400 797.600v1.700M1196.400 790.300h1.700M1212.700 790.300h1.700M1199 783.900l1.200 1.200M1210.600 795.500l1.200 1.200M1199 796.700l1.200-1.200M1210.600 785.100l1.200-1.200"/></g>
<clipPath id="mclip"><circle cx="1239.100" cy="790.300" r="7.400"/></clipPath>
<circle cx="1239.100" cy="790.300" r="8.100" stroke-width="1.800"/>
<circle cx="1244.700" cy="790.300" r="6.600" fill="#b1b1b3" stroke="none" clip-path="url(#mclip)"/>
<g stroke-width="2" stroke-linejoin="round"><path d="M1268.600 783.200h5.600l4.500 4.300v8.400c0 1.100-.9 2-2 2h-8.100c-1.100 0-2-.9-2-2v-10.700c0-1.100.9-2 2-2z"/><path d="M1274.200 783.700v3.800h4" stroke-width="1.200"/><path d="M1269.700 788.300h2.300M1269.700 791h5.200M1269.700 793.700h5.800" stroke-width="1.300"/></g>
</svg>
<div class="abs" style="left:874px;top:67px;width:418px;height:306px;background:#1b1b1e"></div>
<div class="abs" style="left:874px;top:112.8px;width:418px;height:29.7px;background:#232327;border-top:1px solid #38383d;border-bottom:1px solid #38383d"></div>
<div class="abs" style="left:878px;top:118.6px;font-size:14.6px;line-height:18px;color:#b1b1b3;white-space:nowrap">Inherited from div#dragDropAreaTabBar</div>
<div class="abs" style="left:874px;top:209.8px;width:418px;height:29.7px;background:#232327;border-top:1px solid #38383d;border-bottom:1px solid #38383d"></div>
<div class="abs" style="left:878px;top:215.6px;font-size:14.73px;line-height:18px;color:#b1b1b3;white-space:nowrap">Inherited from body#mainbody</div>
<div class="abs mono" style="left:878px;top:69.1px;height:21px;line-height:21px;color:#bcbcc0">element {</div>
<svg class="ic" width="16" height="16" viewBox="0 0 16 16" style="left:961.7px;top:70.8px" stroke="#88888c" stroke-width="2.100"><rect x="4.300" y="3" width="7.400" height="7.400" rx="1.200"/><path d="M8 .5v2.500M8 10.400v2.500M1.800 6.700h2.500M11.700 6.700h2.500"/></svg>
<div class="abs mono" style="right:418px;top:69.1px;height:21px;line-height:21px;color:#8f8f94">inline</div>
<div class="abs mono" style="left:878px;top:90.5px;height:21px;line-height:21px;color:#bcbcc0">}</div>
<div class="abs mono" style="left:878px;top:145.1px;height:21px;line-height:21px;color:#bcbcc0">div.tabBar    {</div>
<svg class="ic" width="16" height="16" viewBox="0 0 16 16" style="left:964px;top:146.8px" stroke="#88888c" stroke-width="2.100"><rect x="4.300" y="3" width="7.400" height="7.400" rx="1.200"/><path d="M8 .5v2.500M8 10.400v2.500M1.800 6.700h2.500M11.700 6.700h2.500"/></svg>
<div class="abs mono" style="right:418px;top:145.1px;height:21px;line-height:21px;color:#8f8f94">style.css.php:5148</div>
<div class="abs mono" style="left:901.6px;top:168.2px;height:21px;line-height:21px;color:#b1b1b3"><span class="t">color</span>:<span class="an" style="position:absolute;left:74.300px;top:0">var(--colortextbacktab)<span style="color:#b1b1b3">;</span></span></div>
<div class="abs" style="left:956px;top:171.5px;width:15px;height:15px;border-radius:8px;background:#000;border:1px solid #b1b1b3"></div>
<div class="abs mono" style="left:878px;top:188.0px;height:21px;line-height:21px;color:#bcbcc0">}</div>
<div class="abs mono" style="left:878px;top:242.2px;height:21px;line-height:21px;color:#bcbcc0">body    {</div>
<svg class="ic" width="16" height="16" viewBox="0 0 16 16" style="left:915.8px;top:243.6px" stroke="#88888c" stroke-width="2.100"><rect x="4.300" y="3" width="7.400" height="7.400" rx="1.200"/><path d="M8 .5v2.500M8 10.400v2.500M1.800 6.700h2.500M11.700 6.700h2.500"/></svg>
<div class="abs mono" style="right:418px;top:242.2px;height:21px;line-height:21px;color:#8f8f94">style.css.php:91</div>
<div class="abs mono" style="left:901.6px;top:264.9px;height:21px;line-height:21px;color:#b1b1b3"><span class="t">font-size</span>: <span class="an">0.92em</span>;</div>
<div class="abs mono" style="left:901.6px;top:286.2px;height:21px;line-height:21px;color:#b1b1b3"><span class="t">line-height</span>: <span class="an">1.4</span>;</div>
<div class="abs mono" style="left:901.6px;top:307.1px;height:21px;line-height:21px;color:#b1b1b3"><span class="t">font-family</span>: <span class="an">arial,tahoma,verdana,helvetica</span>;</div>
<div class="abs mono" style="left:901.6px;top:328.1px;height:21px;line-height:21px;color:#b1b1b3"><span class="t">font-weight</span>: <span class="an">400</span>;</div>
<div class="abs mono" style="left:901.6px;top:349.1px;height:21px;line-height:21px;color:#b1b1b3"><span class="t">direction</span>: <span class="an">ltr</span>;</div>
</div>
<div id="layout">
<div class="abs" style="left:1292px;top:37px;width:2px;height:336px;background:#38383d"></div>
<div class="abs" style="left:1294px;top:37px;width:412px;height:29px;background:#0c0c0d"></div>
<div class="abs" style="left:1327px;top:37px;width:69px;height:2px;background:#0a84ff"></div>
<svg class="ic" width="18" height="16" viewBox="0 0 18 16" style="left:1301px;top:44px" stroke-width="1.400" stroke="#8f8f94"><rect x=".7" y=".7" width="16.300" height="14" rx="1.500"/><path d="M12.300 .7v14"/><rect x="12.300" y=".7" width="4.700" height="14" fill="#3a3a3e" stroke="none"/><path d="M4.300 5 8.300 7.700 4.300 10.400z" fill="#b1b1b3" stroke="none"/></svg>
<div class="abs" style="left:1340px;top:42px;font-size:14.07px;line-height:18px;color:#fff;white-space:nowrap">Layout</div>
<div class="abs" style="left:1408.5px;top:42px;font-size:14.5px;line-height:18px;color:#b1b1b3;white-space:nowrap">Computed</div>
<div class="abs" style="left:1502px;top:42px;font-size:13.7px;line-height:18px;color:#b1b1b3;white-space:nowrap">Changes</div>
<div class="abs" style="left:1583.5px;top:42px;font-size:14.9px;line-height:18px;color:#b1b1b3;white-space:nowrap">Compatibility</div>
<div class="abs" style="left:1695px;top:38px;width:1px;height:28px;background:#38383d"></div>
<div class="arr" style="left:1699px;top:49px;border-left-width:4.500px;border-right-width:4.500px;border-top-width:5.500px;border-top-color:#b1b1b3"></div>
<div class="abs" style="left:1294px;top:67px;width:412px;height:306px;background:#1b1b1e"></div>
<div class="abs" style="left:1294px;top:66px;width:407px;height:30.8px;background:#232327;border-top:1px solid #38383d;border-bottom:1px solid #38383d"></div>
<div class="arr" style="left:1301px;top:78.4px"></div>
<div class="abs" style="left:1317.500px;top:72.4px;font-size:13.86px;line-height:20px;color:#b1b1b3;white-space:nowrap">Flexbox</div>
<div class="abs" style="left:1294px;top:129.800px;width:407px;height:31px;background:#232327;border-top:1px solid #38383d;border-bottom:1px solid #38383d"></div>
<div class="arr" style="left:1301px;top:142.6px"></div>
<div class="abs" style="left:1317.500px;top:136.6px;font-size:14.1px;line-height:18px;color:#b1b1b3;white-space:nowrap">Grid</div>
<div class="abs" style="left:1294px;top:194.800px;width:407px;height:31px;background:#232327;border-top:1px solid #38383d;border-bottom:1px solid #38383d"></div>
<div class="arr" style="left:1301px;top:207.6px"></div>
<div class="abs" style="left:1317.500px;top:201.6px;font-size:14.15px;line-height:18px;color:#b1b1b3;white-space:nowrap">Box Model</div>
<div class="abs" style="left:1317.500px;top:104.5px;font-size:14.200px;line-height:18px;font-style:italic;color:#b1b1b3;white-space:nowrap">Select a Flex container or item to continue.</div>
<div class="abs" style="left:1317.500px;top:170.8px;font-size:13.800px;line-height:18px;font-style:italic;color:#b1b1b3;white-space:nowrap">CSS Grid is not in use on this page</div>
<div class="abs" style="left:1701px;top:67px;width:5px;height:306px;background:#101012"></div>
<div class="abs" style="left:1701.500px;top:68px;width:4.500px;height:146px;background:#4f4f55;border-radius:3px"></div>
<div class="abs" style="left:1294px;top:227px;width:407px;height:146px;overflow:hidden">
<div class="abs" style="left:44.800px;top:27.800px;width:328.400px;height:140px;background:#73764a;border:1px dashed #e2e600"></div>
<div class="abs" style="left:72px;top:55px;width:274px;height:120px;background:#3e3d47"></div>
<div class="abs" style="left:78px;top:61px;width:262px;height:110px;background:#6657a6"></div>
<div class="abs" style="left:109.300px;top:92.300px;width:199.700px;height:23.400px;background:#407aa4;border:1px dashed #22c1ff"></div>
<div class="abs" style="left:199.700px;top:50.500px;width:15px;height:20px;background:#3e3d47;border-radius:4px"></div>
<div class="abs" style="left:68px;top:95.500px;width:14px;height:20.500px;background:#3e3d47;border-radius:4px"></div>
<div class="abs" style="left:335px;top:95.500px;width:14px;height:20.500px;background:#3e3d47;border-radius:4px"></div>
<div class="abs" style="left:199.700px;top:138.700px;width:15px;height:20px;background:#3e3d47;border-radius:4px"></div>
<div class="abs" style="left:72px;top:55px;width:57px;height:18.200px;background:#3e3d47;border-radius:0 0 4px 0"></div>
<div class="abs bmt" style="left:56.600px;top:35.200px">margin</div>
<div class="abs bmt" style="left:76.500px;top:57.300px">border</div>
<div class="abs bmt" style="left:92px;top:76.300px">padding</div>
<div class="abs bmt" style="left:203.200px;top:32.500px;font-size:13.200px">0</div>
<div class="abs bmt" style="left:203.200px;top:52.300px;font-size:13.200px">0</div>
<div class="abs bmt" style="left:203.200px;top:73.300px;font-size:13.200px">0</div>
<div class="abs bmt" style="left:203.200px;top:119.200px;font-size:13.200px">0</div>
<div class="abs bmt" style="left:203.200px;top:139px;font-size:13.200px">0</div>
<div class="abs bmt" style="left:53px;top:97px;font-size:13.200px">0</div>
<div class="abs bmt" style="left:71px;top:97px;font-size:13.200px">0</div>
<div class="abs bmt" style="left:91.500px;top:97px;font-size:13.200px">0</div>
<div class="abs bmt" style="left:318px;top:97px;font-size:13.200px">0</div>
<div class="abs bmt" style="left:338.300px;top:97px;font-size:13.200px">0</div>
<div class="abs bmt" style="left:356.700px;top:97px;font-size:13.200px">0</div>
<div class="abs bmt" style="left:109px;width:200px;text-align:center;top:97px;font-size:13.200px">1005.25×20.6</div>
</div>
</div>
<div id="dtbottom">
<div class="abs" style="left:0;top:373px;width:1706px;height:3px;background:#3a3a3f"></div>
<div class="abs" style="left:0;top:376px;width:1706px;height:22px;background:#232327"></div>
<svg width="18" height="20" viewBox="0 0 18 20" style="left:4px;top:382.5px" fill="#b1b1b3"><path d="M6 2.500C6 1.400 6.900.5 8 .5h2c1.100 0 2 .9 2 2h4.500v2.300h-15V2.500zM2.800 6h12.400v11.500c0 1.100-.9 2-2 2H4.800c-1.100 0-2-.9-2-2z"/><path d="M5.500 8.500v9M9 8.500v9M12.500 8.500v9" stroke="#232327" stroke-width="1.300"/></svg>
<div class="abs" style="left:31px;top:381px;width:1px;height:16px;background:#45454a"></div>
<svg class="ic" width="14" height="14" viewBox="0 0 14 14" style="left:44.500px;top:387.5px" stroke="#8f8f94" stroke-width="1.300"><path d="M1 1.500h12L8.600 7v5.300L5.400 10.500V7z"/></svg>
<div class="abs" style="left:62.500px;top:384.8px;font-size:13.500px;line-height:18px;color:#737378;white-space:nowrap">Filter Output</div>
<div class="abs" style="left:1205.500px;top:381px;width:1px;height:16px;background:#45454a"></div>
<div class="abs" style="left:1212.5px;top:384px;width:50.0px;height:20px;background:#47474d;border-radius:3px;font-size:13.200px;line-height:19.500px;text-align:center;color:#c4c4c8">Errors</div>
<div class="abs" style="left:1266.3px;top:384px;width:68.7px;height:20px;background:#47474d;border-radius:3px;font-size:13.200px;line-height:19.500px;text-align:center;color:#c4c4c8">Warnings</div>
<div class="abs" style="left:1339.4px;top:384px;width:41.0px;height:20px;background:#47474d;border-radius:3px;font-size:13.200px;line-height:19.500px;text-align:center;color:#c4c4c8">Logs</div>
<div class="abs" style="left:1383.5px;top:384px;width:37.0px;height:20px;background:#47474d;border-radius:3px;font-size:13.200px;line-height:19.500px;text-align:center;color:#c4c4c8">Info</div>
<div class="abs" style="left:1423.6px;top:384px;width:52.4px;height:20px;background:#47474d;border-radius:3px;font-size:13.200px;line-height:19.500px;text-align:center;color:#c4c4c8">Debug</div>
<div class="abs" style="left:1484.500px;top:381px;width:1px;height:16px;background:#45454a"></div>
<div class="abs" style="left:1499px;top:384.8px;font-size:13px;line-height:18px;color:#b1b1b3;white-space:nowrap">CSS</div>
<div class="abs" style="left:1539px;top:384.8px;font-size:13px;line-height:18px;color:#b1b1b3;white-space:nowrap">XHR</div>
<div class="abs" style="left:1581px;top:384.8px;font-size:13px;line-height:18px;color:#b1b1b3;white-space:nowrap">Requests</div>
<div class="abs" style="left:1644.500px;top:381px;width:1px;height:16px;background:#45454a"></div>
<svg class="ic" width="20" height="20" viewBox="0 0 20 20" style="left:1652px;top:383px" stroke-width="2.200" stroke-linecap="round"><circle cx="10" cy="10" r="4.200" stroke-width="2"/><path d="M10 1.800v2.500M10 15.700v2.500M1.800 10h2.500M15.700 10h2.500M4.200 4.200 6 6M14 14l1.800 1.800M4.200 15.800 6 14M14 6l1.800-1.800"/></svg>
<svg class="ic" width="14" height="14" viewBox="0 0 14 14" style="left:1691px;top:386.5px" stroke-width="1.800"><path d="M1 1 13 13M13 1 1 13"/></svg>
</div>
</div>
</body>
</html>
